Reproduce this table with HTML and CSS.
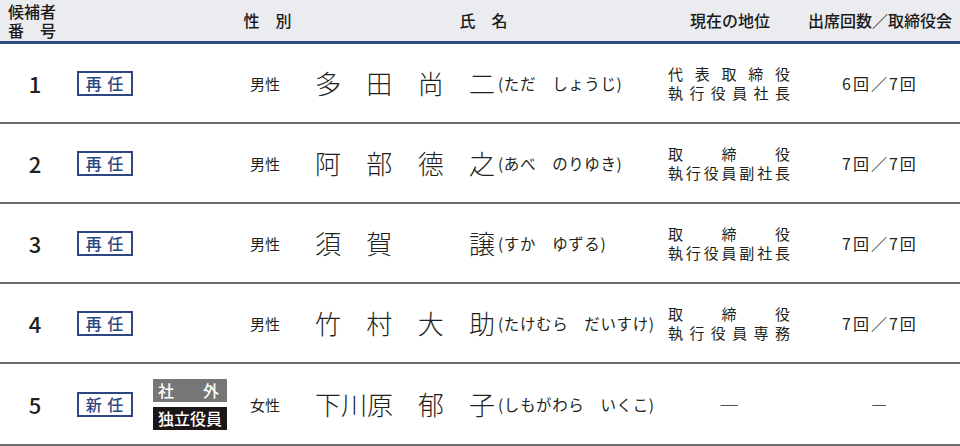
FILE: index.html
```html
<!DOCTYPE html>
<html lang="ja">
<head>
<meta charset="utf-8">
<link rel="stylesheet" href="styles.css">
</head>
<body>
<div class="table">
  <div class="head">
    <div class="h-num"><span>候補者</span><span class="jl"><span>番</span><span>号</span></span></div>
    <div class="h-gender">性　別</div>
    <div class="h-name">氏　名</div>
    <div class="h-pos">現在の地位</div>
    <div class="h-att">出席回数／取締役会</div>
  </div>

  <div class="row">
    <div class="num">1</div>
    <div class="tagcell"><span class="tag">再 任</span></div>
    <div class="extra"></div>
    <div class="gender">男性</div>
    <div class="namecell"><span class="name"><span>多</span><span>田</span><span>尚</span><span>二</span></span><span class="kana">(ただ　しょうじ)</span></div>
    <div class="pos"><span>代表取締役</span><span>執行役員社長</span></div>
    <div class="att">6回／7回</div>
  </div>

  <div class="row">
    <div class="num">2</div>
    <div class="tagcell"><span class="tag">再 任</span></div>
    <div class="extra"></div>
    <div class="gender">男性</div>
    <div class="namecell"><span class="name"><span>阿</span><span>部</span><span>德</span><span>之</span></span><span class="kana">(あべ　のりゆき)</span></div>
    <div class="pos"><span>取締役</span><span>執行役員副社長</span></div>
    <div class="att">7回／7回</div>
  </div>

  <div class="row">
    <div class="num">3</div>
    <div class="tagcell"><span class="tag">再 任</span></div>
    <div class="extra"></div>
    <div class="gender">男性</div>
    <div class="namecell"><span class="name"><span>須</span><span>賀</span><span class="blank"></span><span>譲</span></span><span class="kana">(すか　ゆずる)</span></div>
    <div class="pos"><span>取締役</span><span>執行役員副社長</span></div>
    <div class="att">7回／7回</div>
  </div>

  <div class="row">
    <div class="num">4</div>
    <div class="tagcell"><span class="tag">再 任</span></div>
    <div class="extra"></div>
    <div class="gender">男性</div>
    <div class="namecell"><span class="name"><span>竹</span><span>村</span><span>大</span><span>助</span></span><span class="kana">(たけむら　だいすけ)</span></div>
    <div class="pos"><span>取締役</span><span>執行役員専務</span></div>
    <div class="att">7回／7回</div>
  </div>

  <div class="row last">
    <div class="num">5</div>
    <div class="tagcell"><span class="tag">新 任</span></div>
    <div class="extra"><span class="out"><span>社</span><span>外</span></span><span class="ind">独立役員</span></div>
    <div class="gender">女性</div>
    <div class="namecell"><span class="name"><span>下川原</span><span>郁</span><span>子</span></span><span class="kana">(しもがわら　いくこ)</span></div>
    <div class="pos center">―</div>
    <div class="att">―</div>
  </div>
</div>
</body>
</html>
```

FILE: styles.css
```css
html, body {
  margin: 0;
  padding: 0;
  background: #fff;
}
body {
  font-family: "Noto Sans CJK JP", "Noto Sans", sans-serif;
  color: #231f20;
  width: 960px;
  height: 446px;
  overflow: hidden;
}
.table {
  width: 960px;
}
.head,
.row {
  display: grid;
  grid-template-columns: 70px 78px 92px 75px 353px 132px 160px;
  align-items: center;
}
.head {
  height: 41px;
  background: #ebecf0;
  border-bottom: 3px solid #2e4a80;
  font-size: 16px;
  font-weight: 500;
  line-height: 19px;
  color: #1a1a1a;
}
.h-num {
  display: flex;
  flex-direction: column;
  width: 48px;
  padding-left: 8px;
  line-height: 19px;
}
.jl {
  display: flex;
  justify-content: space-between;
}
.h-gender {
  grid-column: 4 / 5;
  padding-right: 20px;
  text-align: center;
}
.h-name {
  grid-column: 5 / 6;
  text-align: center;
  padding-right: 16px;
}
.h-pos {
  text-align: center;
  padding-right: 8px;
}
.h-att {
  text-align: center;
}
.row {
  height: 78px;
  border-bottom: 2px solid #6e6e6e;
}
.row.last {
  height: 80px;
}
.num {
  text-align: center;
  font-size: 22px;
  font-weight: 500;
}
.tagcell {
  padding-left: 7px;
}
.tag {
  display: flex;
  align-items: center;
  justify-content: center;
  width: 52px;
  height: 21px;
  border: 2px solid #2d4781;
  color: #2d4781;
  font-size: 16px;
  font-weight: 500;
  letter-spacing: 1px;
}
.extra {
  display: flex;
  flex-direction: column;
  gap: 5px;
  padding-left: 5px;
}
.out,
.ind {
  display: flex;
  align-items: center;
  width: 74px;
  height: 23px;
  font-size: 16px;
  font-weight: 500;
  color: #fff;
  box-sizing: border-box;
}
.out {
  background: #767676;
  justify-content: space-between;
  padding: 0 8px 0 5px;
}
.ind {
  background: #1c1617;
  justify-content: center;
}
.gender {
  padding-left: 10px;
  font-size: 15px;
}
.namecell {
  display: flex;
  align-items: center;
}
.name {
  display: flex;
  justify-content: space-between;
  width: 180px;
  font-size: 26px;
  font-weight: 300;
  line-height: 30px;
}
.blank {
  width: 26px;
}
.kana {
  margin-left: 3px;
  font-size: 15.5px;
  letter-spacing: 0.6px;
}
.pos {
  display: flex;
  flex-direction: column;
  width: 122px;
  font-size: 15px;
  line-height: 19px;
}
.pos span {
  text-align: justify;
  text-align-last: justify;
}
.pos.center {
  display: block;
  text-align: center;
  font-size: 20px;
  font-weight: 300;
  padding-right: 10px;
}
.att {
  text-align: center;
  font-size: 16px;
  letter-spacing: 2px;
}
```
